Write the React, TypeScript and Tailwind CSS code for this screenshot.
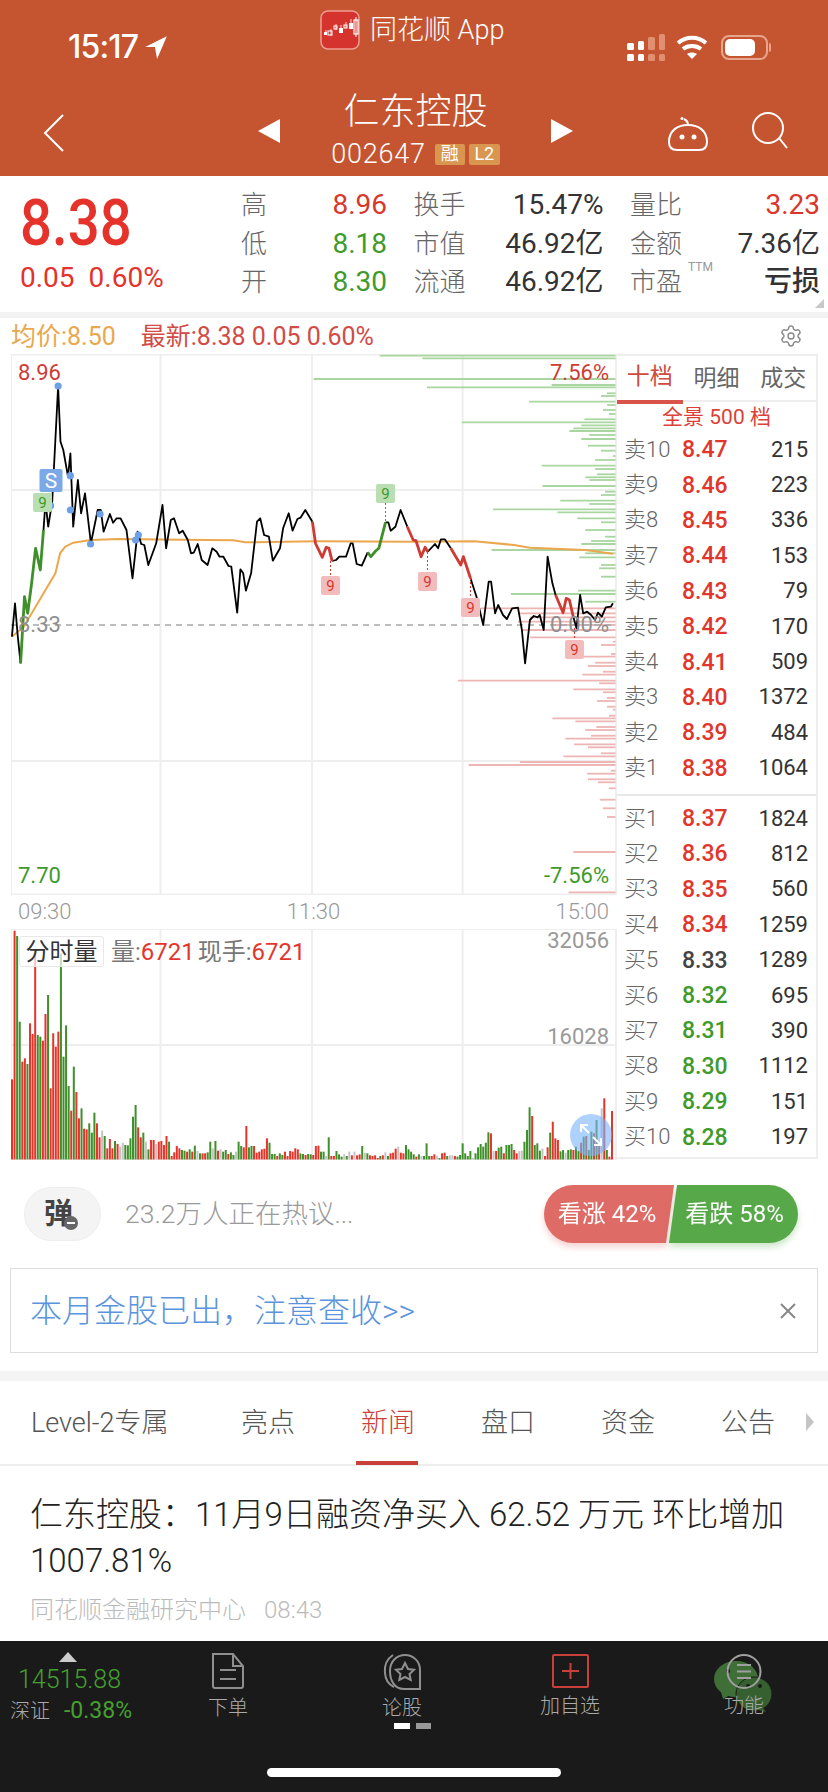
import React from 'react'
import { Settings } from 'lucide-react'

// trace coordinates were read off enlarged crops: x / 2.529, 320 + y / 3 gives page pixels
const toPts = (a: number[]) => {
  const out: string[] = []
  for (let i = 0; i < a.length; i += 2) out.push(`${(a[i] / 2.529).toFixed(1)},${(320 + a[i + 1] / 3).toFixed(1)}`)
  return out.join(' ')
}

const black: number[][] = [
  [30,950,38,850,45,950,52,1030],
  [110,630,115,545,122,620,132,545,147,200,153,365,160,390,172,470,178,400,185,620,197,480,205,580,215,520,230,670,247,570,255,570,262,635,278,582,286,608,295,595,305,595,320,630,335,775,348,635,357,672,365,675,375,735,395,670,411,555,420,685,432,600,440,595,453,640,462,632,475,660,483,700,490,698,500,672,510,720,525,735,537,685,548,695,555,710,565,710,578,738,585,740,600,878,608,748,615,760,622,812,635,760,650,605,658,595,668,645,680,650,690,722,708,685,716,625,730,580,740,632,752,597,760,593,772,570,790,605],
  [840,723,850,720,858,710,875,710,887,670,892,670,902,732,915,737,930,697],
  [975,607,982,607,988,632,1000,620,1013,570,1030,620],
  [1082,695,1100,672,1108,685,1115,658,1125,658,1140,685],
  [1190,775,1205,830,1222,915,1236,785,1242,785,1252,880,1260,855,1272,885,1282,897,1295,865,1310,863,1320,930,1328,1030,1340,900,1350,888,1360,892,1365,885,1375,930,1385,710,1397,790,1405,825],
  [1450,890,1458,925,1467,825,1475,880,1485,875,1495,885,1505,900,1512,878,1522,890,1532,862,1545,860,1550,850],
]
const greenTrace: number[][] = [
  [52,1030,62,830,70,880,80,790,90,685,102,750,110,630],
  [930,697,938,710,950,693,958,685,975,607],
]
const redTrace: number[][] = [
  [790,605,798,670,815,712,825,682,832,685,840,723],
  [1030,620,1045,660,1052,662,1065,710,1075,682,1082,695],
  [1140,685,1165,735,1172,710,1190,775],
  [1405,825,1424,878,1432,835,1440,840,1450,890],
]
const avgLine = [30,950,60,920,90,860,120,800,140,760,152,700,165,680,185,668,230,660,300,657,460,659,590,661,620,667,800,664,1040,665,1200,664,1300,675,1340,683,1480,690,1550,701]

// depth bars: y, left edge
const greenDepth = [107,960,115,1068,177,793,202,1080,195,1395,220,1535,228,1520,245,1338,255,1535,270,1525,282,1540,298,1478,307,1168,316,1470,325,1450,333,1440,345,1490,357,1470,377,1487,392,1520,408,1550,420,1505,437,1370,447,1505,463,1510,472,1480,480,1490,498,1372,515,1530,525,1520,542,1417,552,1490,568,1247,577,1410,595,1460,607,1520,630,1480,650,1530,663,1495,672,1470,690,1243,700,1480,712,1465,735,1520,745,1515,770,1520,812,1462,822,1292,845,1480]
const redDepth = [865,1215,880,1310,892,1340,905,1310,915,1400,930,1320,952,1340]
const redDepthLow = [5,1550,15,1520,42,1545,50,1458,68,1505,78,1487,95,1525,104,1473,122,1158,130,1515,148,1450,157,1525,174,1535,183,1510,200,1535,209,1550,227,1540,235,1397,244,1455,261,1508,270,1480,287,1495,296,1430,313,1452,322,1487,340,1520,349,1425,366,1315,375,1185,392,1545,401,1485,418,1487,427,1512,445,1540,479,1517,505,1525,531,1535,636,1450,757,1438]

const volumes = 'r478 r32 g48 g305 r425 r415 g432 r310 r342 r95 g345 g350 r362 r282 g225 r505 r340 r380 r335 g100 g410 g316 g498 r572 g440 r516 r595 g565 r626 r628 g610 g638 g578 r610 r652 n632 g648 r685 r657 r685 g663 r672 n680 n668 g675 g676 g655 g590 g555 r622 r652 g638 n665 g688 r660 r660 n672 r665 r663 r675 r648 g665 r708 r697 r678 r685 g690 g692 r695 g688 r695 g677 n693 g700 r700 r700 g697 g665 n685 g663 r692 n688 g695 g690 r702 g697 g705 n695 g665 g678 r682 r618 g682 g678 r678 r698 r695 r688 r686 r655 g668 g702 g702 r708 g700 g705 r695 r708 r693 r695 r685 r688 g700 g702 r705 g702 g703 r705 r678 r677 g695 g695 n708 g652 r708 r708 g693 g703 g710 n703 g708 n695 r706 n695 r706 r703 g678 n698 g700 r706 r708 r706 r714 g708 r706 n697 g708 r700 r698 r686 n680 r698 r700 g675 g688 g695 g703 r710 g703 n708 g708 g670 g708 r708 r703 n708 g714 r700 r698 g708 n706 n706 r708 g710 g705 g670 g700 g708 g693 n714 g700 g682 g672 g680 g668 g637 r640 n693 r693 g683 g680 r700 g675 g675 g672 r690 r700 n693 n692 g665 g630 g562 r588 g675 g670 g692 n686 r708 r682 g638 r605 r655 r660 g694 g690 n698 g690 g688 r690 g680 g693 r668 g650 r648 g690 g635 r640 g600 r670 n565 r535 g690 r710 r573'.split(' ')

const volColor: Record<string, string> = { r: '#e5352b', g: '#3f8f2a', n: '#c4c4c4' }

const sells = [
  ['卖10', '8.47', '215'], ['卖9', '8.46', '223'], ['卖8', '8.45', '336'], ['卖7', '8.44', '153'], ['卖6', '8.43', '79'],
  ['卖5', '8.42', '170'], ['卖4', '8.41', '509'], ['卖3', '8.40', '1372'], ['卖2', '8.39', '484'], ['卖1', '8.38', '1064'],
]
const buys = [
  ['买1', '8.37', '1824', 'text-[#e0362c]'], ['买2', '8.36', '812', 'text-[#e0362c]'], ['买3', '8.35', '560', 'text-[#e0362c]'],
  ['买4', '8.34', '1259', 'text-[#e0362c]'], ['买5', '8.33', '1289', 'text-[#444]'], ['买6', '8.32', '695', 'text-[#3f9a2c]'],
  ['买7', '8.31', '390', 'text-[#3f9a2c]'], ['买8', '8.30', '1112', 'text-[#3f9a2c]'], ['买9', '8.29', '151', 'text-[#3f9a2c]'],
  ['买10', '8.28', '197', 'text-[#3f9a2c]'],
]

function AppLogo() {
  return (
    <svg width="40" height="40" viewBox="0 0 40 40">
      <rect x="1" y="1" width="38" height="38" rx="7" fill="#d5332e" stroke="#ee9d93" strokeWidth="1.5" />
      <path d="M6 20v5M11 19v7M16 14v6M21 15v7M26 12v6M31 9v8" stroke="#f8d0cc" strokeWidth="1" />
      <rect x="4" y="22" width="3" height="3" fill="#fff" />
      <rect x="8" y="21" width="4" height="4" fill="none" stroke="#fff" strokeWidth="1" />
      <rect x="14" y="16" width="3" height="3" fill="none" stroke="#fff" strokeWidth="1" />
      <rect x="19" y="18" width="4" height="5" fill="#fff" />
      <rect x="24" y="15" width="3" height="3" fill="none" stroke="#fff" strokeWidth="1" />
      <rect x="29" y="13" width="4" height="6" fill="#fff" />
      <path d="M36 7v20" stroke="#fff" strokeWidth="1" />
      <rect x="34" y="10" width="4" height="14" fill="none" stroke="#fff" strokeWidth="1.200" />
    </svg>
  )
}

function Signal() {
  const cols = [
    { top: 'h-[7px]', tone: 'bg-white' },
    { top: 'h-[9px]', tone: 'bg-white' },
    { top: 'h-[13px]', tone: 'bg-[#e08f71]' },
    { top: 'h-[16px]', tone: 'bg-[#e08f71]' },
  ]
  return (
    <div className="flex items-end gap-[4px]">
      {cols.map((c, i) => (
        <div key={i} className="flex flex-col gap-[4px]">
          <i className={`block w-[6.500px] rounded-[1.500px] ${c.top} ${c.tone}`} />
          <i className={`block h-[7px] w-[6.500px] rounded-[1.500px] ${c.tone}`} />
        </div>
      ))}
    </div>
  )
}

function StatusBar() {
  return (
    <div className="flex h-[72px] text-white">
      <div className="ml-[68px] mt-[29px] flex h-[36px] w-[252px] items-center gap-[6px]">
        <span className="font-['Inter'] text-[32px] leading-none font-medium tracking-[-0.8px]">15:17</span>
        <svg width="24" height="26" viewBox="0 0 22 24"><path d="M21 2 1 12h9l2 11z" fill="#fff" /></svg>
      </div>
      <div className="mt-[10px] flex h-[40px] w-[307px] items-center gap-[10px]">
        <AppLogo />
        <span className="text-[27px] leading-none font-light">同花顺 App</span>
      </div>
      <div className="mt-[34px] flex h-[26px] items-center">
        <Signal />
        <svg className="ml-[10px]" width="34" height="26" viewBox="0 0 34 26" fill="none" stroke="#fff" strokeWidth="4">
          <path d="M3 9c8-7 20-7 28 0" />
          <path d="M8 15c5-4 13-4 18 0" />
          <path d="M17 25l-5-5c3-2 7-2 10 0z" fill="#fff" stroke="none" />
        </svg>
        <div className="ml-[12px] flex items-center">
          <div className="h-[25px] w-[47px] rounded-[8px] border-2 border-[#e6a58c] p-[2px]">
            <div className="h-full w-[30px] rounded-[5px] bg-white" />
          </div>
          <div className="ml-[1px] h-[9px] w-[2px] rounded-r bg-[#e6a58c]" />
        </div>
      </div>
    </div>
  )
}

function NavBar() {
  return (
    <div className="flex h-[104px] text-white">
      <svg className="ml-[42px] mt-[41px]" width="24" height="40" viewBox="0 0 24 40" fill="none" stroke="#fff" strokeWidth="2">
        <path d="M21 2 3 20l18 18" />
      </svg>
      <div className="ml-[192px] mt-[47px] h-0 w-0 border-y-[12px] border-r-[22px] border-y-transparent border-r-white" />
      <div className="flex w-[271px] flex-col items-center">
        <div className="mt-[20px] text-[36px] leading-[40px] font-light">仁东控股</div>
        <div className="mt-[10px] flex h-[24px] items-center">
          <span className="text-[27px] leading-none font-light tracking-[0.8px]">002647</span>
          <span className="ml-[9px] flex h-[21px] w-[30px] items-center justify-center rounded-[2px] bg-[#d9964f] text-[18px] leading-none">融</span>
          <span className="ml-[4px] flex h-[21px] w-[31px] items-center justify-center rounded-[2px] bg-[#d9964f] text-[18px] leading-none">L2</span>
        </div>
      </div>
      <div className="mt-[47px] h-0 w-0 border-y-[12px] border-l-[22px] border-y-transparent border-l-white" />
      <svg className="ml-[94px] mt-[44px]" width="42" height="36" viewBox="0 0 42 36" fill="none" stroke="#fff" strokeWidth="2">
        <path d="M2 26c0-11 8-17 19-17s19 6 19 17c0 5-3 8-8 8H10c-5 0-8-3-8-8z" />
        <path d="M21 9c0-3-2-5-4-6" />
        <circle cx="15" cy="2.5" r="1.5" fill="#fff" stroke="none" />
        <circle cx="15" cy="21" r="2.5" fill="#fff" stroke="none" />
        <circle cx="27" cy="21" r="2.5" fill="#fff" stroke="none" />
      </svg>
      <svg className="ml-[42px] mt-[39px]" width="38" height="38" viewBox="0 0 38 38" fill="none" stroke="#fff" strokeWidth="2">
        <circle cx="17" cy="17" r="15" />
        <path d="m28 27 8 10" />
      </svg>
    </div>
  )
}

function Stat({ label, value, tone, sup }: { label: string; value: string; tone: string; sup?: boolean }) {
  return (
    <div className="relative flex h-[38.5px] items-center justify-between">
      <span className="text-[26px] leading-none font-light text-[#666]">{label}</span>
      {sup && <span className="absolute left-[58px] top-[-2px] text-[12px] leading-none text-[#999]">TTM</span>}
      <span className={`text-[28px] leading-none ${tone}`}>{value}</span>
    </div>
  )
}

function Quote() {
  return (
    <div className="relative flex h-[136px] bg-white">
      <div className="w-[241px] pl-[20px]">
        <div className="mt-[13px] origin-left scale-x-[0.88] text-[64px] leading-[70px] font-medium text-[#e5322a]">8.38</div>
        <div className="mt-[3px] flex gap-[14px] text-[28px] leading-[32px] text-[#e5322a]">
          <span>0.05</span><span>0.60%</span>
        </div>
      </div>
      <div className="mt-[10px] grid grid-cols-[146px_190px_190px] content-start gap-x-[26.500px]">
        <Stat label="高" value="8.96" tone="text-[#d9362c]" />
        <Stat label="换手" value="15.47%" tone="text-[#333]" />
        <Stat label="量比" value="3.23" tone="text-[#d9362c]" />
        <Stat label="低" value="8.18" tone="text-[#3f9a2c]" />
        <Stat label="市值" value="46.92亿" tone="text-[#333]" />
        <Stat label="金额" value="7.36亿" tone="text-[#333]" />
        <Stat label="开" value="8.30" tone="text-[#3f9a2c]" />
        <Stat label="流通" value="46.92亿" tone="text-[#333]" />
        <Stat label="市盈" value="亏损" tone="text-[#333] font-medium" sup />
      </div>
      <div className="absolute bottom-[4px] right-[4px] h-0 w-0 border-b-[9px] border-l-[9px] border-b-[#c8c8c8] border-l-transparent" />
    </div>
  )
}

function Tag({ x, y, tone, fromY, toY }: { x: number; y: number; tone: 'r' | 'g'; fromY: number; toY: number }) {
  const bg = tone === 'r' ? '#f2bcbc' : '#b9deb1'
  const fg = tone === 'r' ? '#d9362c' : '#3f9a2c'
  return (
    <g>
      <path d={`M${x + 9.5} ${fromY}V${toY}`} stroke={fg} strokeWidth="1" strokeDasharray="2 2" />
      <rect x={x} y={y} width="19" height="19" rx="2" fill={bg} />
      <text x={x + 9.5} y={y + 15} textAnchor="middle" fontSize="15" fill={fg}>9</text>
    </g>
  )
}

function LineChart() {
  return (
    <div className="relative h-[541px] w-[606px]">
      <svg className="block" width="606" height="541" viewBox="11 354 606 541">
        <rect x="11" y="354.5" width="605" height="540" fill="#fff" stroke="#eee" strokeWidth="2" />
        {[490, 761].map(y => <path key={y} d={`M11 ${y}H616`} stroke="#eee" strokeWidth="2" />)}
        {[160.5, 312, 462.6].map(x => <path key={x} d={`M${x} 354V895`} stroke="#eee" strokeWidth="2" />)}
        {[[greenDepth, 320, '#a9d5a0'], [redDepth, 320, '#eeb5b5'], [redDepthLow, 640, '#eeb5b5']].map(([list, base, color], k) => {
          const arr = list as number[]
          const rows = []
          for (let i = 0; i < arr.length; i += 2) {
            const y = (base as number) + arr[i] / 3
            rows.push(<path key={i} d={`M${(arr[i + 1] / 2.529).toFixed(1)} ${y.toFixed(1)}H615.5`} stroke={color as string} strokeWidth="1.8" />)
          }
          return <g key={k}>{rows}</g>
        })}
        <path d="M11 625H616" stroke="#a8a8a8" strokeWidth="1.5" strokeDasharray="6 5" />
        <polyline points={toPts(avgLine)} fill="none" stroke="#eba74e" strokeWidth="2" />
        {black.map((l, i) => <polyline key={i} points={toPts(l)} fill="none" stroke="#000" strokeWidth="1.8" strokeLinejoin="round" />)}
        {greenTrace.map((l, i) => <polyline key={i} points={toPts(l)} fill="none" stroke="#3f8f2a" strokeWidth="2.8" strokeLinejoin="round" />)}
        {redTrace.map((l, i) => <polyline key={i} points={toPts(l)} fill="none" stroke="#cf3b33" strokeWidth="2.8" strokeLinejoin="round" />)}
        {[[147,198],[178,467],[128,557],[178,570],[253,582],[229,672],[343,660],[350,645]].map(([x, y]) => (
          <circle key={x + '-' + y} cx={x / 2.529} cy={320 + y / 3} r="3.6" fill="#6ea0e8" />
        ))}
        <Tag x={33} y={493} tone="g" fromY={512} toY={512} />
        <Tag x={376} y={484} tone="g" fromY={503} toY={522} />
        <Tag x={321} y={576} tone="r" fromY={561} toY={576} />
        <Tag x={418} y={572} tone="r" fromY={552} toY={572} />
        <Tag x={461} y={598} tone="r" fromY={578} toY={598} />
        <Tag x={565} y={640} tone="r" fromY={628} toY={640} />
        <rect x="39.5" y="469" width="23" height="23" rx="2" fill="#7ba9e8" />
        <text x="51" y="488" textAnchor="middle" fontSize="21" fill="#fff">S</text>
      </svg>
      <span className="absolute left-[7px] top-[7px] text-[22px] leading-[24px] text-[#cf3b35]">8.96</span>
      <span className="absolute right-[8px] top-[7px] text-[22px] leading-[24px] text-[#cf3b35]">7.56%</span>
      <span className="absolute left-[7px] top-[259px] text-[22px] leading-[24px] text-[#8f8f8f]">8.33</span>
      <span className="absolute right-[8px] top-[259px] text-[22px] leading-[24px] text-[#8f8f8f]">0.00%</span>
      <span className="absolute bottom-[7px] left-[7px] text-[22px] leading-[24px] text-[#3f9a2c]">7.70</span>
      <span className="absolute bottom-[7px] right-[8px] text-[22px] leading-[24px] text-[#3f9a2c]">-7.56%</span>
    </div>
  )
}

function VolumeChart() {
  const step = 600 / (volumes.length - 1)
  return (
    <div className="relative h-[231px] w-[606px]">
      <svg className="block" width="606" height="231" viewBox="11 929 606 231">
        <rect x="11" y="929" width="605" height="231" fill="#fff" stroke="#eee" strokeWidth="2" />
        <path d="M11 1045H616" stroke="#eee" strokeWidth="2" />
        {[160.5, 312, 462.6].map(x => <path key={x} d={`M${x} 929V1160`} stroke="#eee" strokeWidth="2" />)}
        {volumes.map((v, i) => {
          const top = 920 + Number(v.slice(1)) / 3
          return <rect key={i} x={11 + i * step} y={top} width="2" height={1159.5 - top} fill={volColor[v[0]]} />
        })}
      </svg>
      <div className="absolute left-[8px] top-[7px] flex h-[31px] items-center gap-[7px] text-[24px] leading-none">
        <span className="flex h-[31px] w-[85px] items-center justify-center rounded-[3px] border border-[#e8e8e8] bg-white/70 text-[#333]">分时量</span>
        <span className="text-[#777]">量:<span className="mr-[3px] text-[#e5352b]">6721</span>现手:<span className="text-[#e5352b]">6721</span></span>
      </div>
      <span className="absolute right-[8px] top-[0px] text-[22px] leading-[24px] text-[#999]">32056</span>
      <span className="absolute right-[8px] top-[96px] text-[22px] leading-[24px] text-[#999]">16028</span>
      <div className="absolute left-[559px] top-[185px] flex h-[42px] w-[42px] items-center justify-center rounded-full bg-[#78b4fa]/60">
        <svg width="28" height="28" viewBox="0 0 28 28" fill="none" stroke="#fff" strokeWidth="2">
          <path d="M4 11V4h7M4 4l8 8M24 17v7h-7M24 24l-8-8" />
        </svg>
      </div>
    </div>
  )
}

function BookRow({ label, price, qty, tone }: { label: string; price: string; qty: string; tone: string }) {
  return (
    <div className="flex h-[35.4px] items-center pl-[7px] pr-[8px]">
      <span className="w-[58px] text-[22px] leading-none font-light text-[#666]">{label}</span>
      <span className={`text-[23px] leading-none font-medium ${tone}`}>{price}</span>
      <span className="ml-auto text-[22px] leading-none text-[#333]">{qty}</span>
    </div>
  )
}

function Book() {
  return (
    <div className="h-[805px] w-[201px] border-y-2 border-r-2 border-[#eee] bg-white">
      <div className="flex h-[46px] border-b-2 border-[#eee]">
        <div className="flex h-[48px] w-[66px] items-center justify-center border-b-4 border-[#d9534a] pb-[4px] text-[23px] leading-none text-[#cf4a40]">十档</div>
        <div className="flex h-[44px] w-[68px] items-center justify-center text-[23px] leading-none text-[#666]">明细</div>
        <div className="flex h-[44px] w-[66px] items-center justify-center text-[23px] leading-none text-[#666]">成交</div>
      </div>
      <div className="flex h-[30px] items-center justify-center text-[21px] leading-none text-[#dd4038]">全景 500 档</div>
      {sells.map(r => <BookRow key={r[0]} label={r[0]} price={r[1]} qty={r[2]} tone="text-[#e0362c]" />)}
      <div className="mb-[5px] mt-[8px] h-[2px] bg-[#e8e8e8]" />
      {buys.map(r => <BookRow key={r[0]} label={r[0]} price={r[1]} qty={r[2]} tone={r[3]} />)}
    </div>
  )
}

function Sentiment() {
  return (
    <div className="flex h-[108px] items-center bg-white">
      <div className="relative ml-[24px] flex h-[54px] w-[77px] items-center justify-center rounded-full border border-[#eee] bg-[#f4f4f4]">
        <span className="mr-[8px] text-[29px] leading-none font-bold text-[#444]">弹</span>
        <span className="absolute left-[39px] top-[28px] flex h-[14px] w-[14px] items-center justify-center rounded-full bg-[#666]">
          <i className="block h-[2px] w-[8px] bg-white" />
        </span>
      </div>
      <span className="ml-[24px] text-[26.500px] leading-none font-light text-[#999]">23.2万人正在热议...</span>
      <div className="ml-auto mr-[30px] flex">
        <div className="drop-shadow-[0_4px_3px_rgba(222,107,102,0.3)]">
          <div className="flex h-[58px] w-[130px] items-center justify-center rounded-l-[29px] bg-[#de6b66] pr-[4px] text-[24px] leading-none text-white [clip-path:polygon(0_0,100%_0,calc(100%-8px)_100%,0_100%)]">看涨 42%</div>
        </div>
        <div className="-ml-[5px] drop-shadow-[0_4px_3px_rgba(87,168,72,0.3)]">
          <div className="flex h-[58px] w-[129px] items-center justify-center rounded-r-[29px] bg-[#57a848] pl-[2px] text-[24px] leading-none text-white [clip-path:polygon(8px_0,100%_0,100%_100%,0_100%)]">看跌 58%</div>
        </div>
      </div>
    </div>
  )
}

function Tabs() {
  const items = [
    { t: 'Level-2专属', w: 'w-[208px] pl-[31px]' }, { t: '亮点', w: 'w-[120px]' }, { t: '新闻', w: 'w-[120px]', on: true },
    { t: '盘口', w: 'w-[120px]' }, { t: '资金', w: 'w-[120px]' }, { t: '公告', w: 'w-[120px]' },
  ]
  return (
    <div className="flex h-[85px] border-b-2 border-[#eee] bg-white">
      {items.map(i => (
        <div key={i.t} className={`relative flex h-[84px] items-center ${i.w} ${i.t === 'Level-2专属' ? '' : 'justify-center'}`}>
          <span className={`text-[27px] leading-none font-light ${i.on ? 'text-[#c8403a]' : 'text-[#555]'}`}>{i.t}</span>
          {i.on && <i className="absolute bottom-0 left-[28px] block h-[4px] w-[62px] bg-[#c8403a]" />}
        </div>
      ))}
      <div className="-ml-[2px] mt-[32px] h-0 w-0 border-y-[9px] border-l-[8px] border-y-transparent border-l-[#c4c4c4]" />
    </div>
  )
}

function TabBar() {
  const label = 'text-[20px] leading-none font-light text-[#aaa]'
  return (
    <div className="h-[152px] bg-[#1a1a1a]">
      <div className="flex h-[82px]">
        <div className="w-[190px] pl-[10px]">
          <div className="ml-[49px] mt-[11px] h-0 w-0 border-x-[9px] border-b-[10px] border-x-transparent border-b-[#ccc]" />
          <div className="ml-[8px] mt-[4px] text-[25px] leading-[28px] font-light text-[#45a030]">14515.88</div>
          <div className="mt-[5px] flex items-center gap-[14px]">
            <span className="text-[20px] leading-none font-light text-[#aaa]">深证</span>
            <span className="text-[23px] leading-none text-[#45a030]">-0.38%</span>
          </div>
        </div>
        <div className="mt-[12px] flex w-[76px] flex-col items-center gap-[9px]">
          <svg width="34" height="36" viewBox="0 0 34 36" fill="none" stroke="#8f8f8f" strokeWidth="2">
            <path d="M2 1h20l10 12v20a2 2 0 0 1-2 2H4a2 2 0 0 1-2-2zM22 1v12h10" />
            <path d="M9 17h16M9 26h16" />
          </svg>
          <span className={label}>下单</span>
        </div>
        <div className="ml-[101px] mt-[12px] flex w-[70px] flex-col items-center gap-[8px]">
          <svg width="40" height="37" viewBox="0 0 40 37" fill="none" stroke="#8f8f8f" strokeWidth="2">
            <path d="M12 34c-11-5-13-24-1-32" />
            <path d="M38 36H22C12 36 8 27 8 18 8 8 15 2 23 2c8 0 15 6 15 15z" />
            <path d="m23 10 3 6 6 .8-4.500 4.200 1.200 6-5.700-3-5.700 3 1.200-6L14 16.800l6-.8z" />
          </svg>
          <span className={label}>论股</span>
        </div>
        <div className="ml-[98px] mt-[13px] flex w-[70px] flex-col items-center gap-[8px]">
          <svg width="37" height="34" viewBox="0 0 37 34" fill="none" stroke="#c9403a" strokeWidth="2">
            <rect x="1" y="1" width="35" height="32" rx="1" />
            <path d="M18.500 9v16M10 17h17" />
          </svg>
          <span className={label}>加自选</span>
        </div>
        <div className="relative ml-[104px] mt-[13px] flex w-[70px] flex-col items-center gap-[7px]">
          {/* translucent chat bubbles floating under the menu entry strokes */}
          <svg className="absolute left-[5px] top-[7px]" width="58" height="52" viewBox="0 0 58 52">
            <ellipse cx="22" cy="18" rx="22" ry="18" fill="#3f6f36" />
            <path d="M6 28 9 38l9-5z" fill="#3f6f36" />
            <ellipse cx="40" cy="33" rx="18" ry="17" fill="#36602f" stroke="#1a1a1a" strokeWidth="1" />
            <path d="m47 44 5 7-10-3z" fill="#36602f" />
            <circle cx="14" cy="10" r="2.200" fill="#1a1a1a" />
            <circle cx="34" cy="25" r="2" fill="#1a1a1a" />
            <circle cx="46" cy="25" r="2" fill="#1a1a1a" />
          </svg>
          <svg className="relative" width="36" height="35" viewBox="0 0 36 35" fill="none" stroke="#a0a0a0" strokeWidth="2">
            <circle cx="18" cy="17.500" r="16.500" />
            <path d="M11 11h14M11 17.500h14M11 24h14" />
          </svg>
          <span className={`relative ${label}`}>功能</span>
        </div>
      </div>
      <div className="ml-[394px] flex gap-[6px]">
        <i className="block h-[6px] w-[16px] bg-white" />
        <i className="block h-[6px] w-[15px] bg-[#999]" />
      </div>
      <div className="ml-[267px] mt-[39px] h-[9px] w-[294px] rounded-full bg-white" />
    </div>
  )
}

export default function App() {
  return (
    <div className="h-[1792px] w-[828px] overflow-hidden bg-white font-['Roboto','Noto_Sans_CJK_SC',sans-serif]">
      <div className="h-[176px] bg-[#c55531]">
        <StatusBar />
        <NavBar />
      </div>
      <Quote />
      <div className="h-[6px] bg-[#f2f2f2]" />
      <div className="flex h-[36px] items-center pl-[11px] text-[25px] leading-none">
        <span className="text-[#e9a84d]">均价:8.50</span>
        <span className="ml-[25px] text-[#d24b46]">最新:8.38 0.05 0.60%</span>
        <Settings className="ml-auto mr-[25px]" size={24} strokeWidth={1.4} color="#888" />
      </div>
      <div className="flex pl-[11px]">
        <div className="w-[606px]">
          <LineChart />
          <div className="flex h-[34px] items-center justify-between pl-[7px] pr-[8px] text-[22px] leading-none font-light text-[#999]">
            <span>09:30</span><span>11:30</span><span>15:00</span>
          </div>
          <VolumeChart />
        </div>
        <Book />
      </div>
      <Sentiment />
      <div className="mx-[10px] flex h-[85px] items-center border border-[#ddd] pl-[19px] pr-[20px]">
        <span className="text-[32px] leading-none font-light text-[#5b93dd]">本月金股已出，注意查收&gt;&gt;</span>
        <svg className="ml-auto" width="18" height="18" viewBox="0 0 18 18" stroke="#888" strokeWidth="2"><path d="m2 2 14 14M16 2 2 16" /></svg>
      </div>
      <div className="mt-[18px] h-[10px] bg-[#f4f4f4]" />
      <Tabs />
      <div className="h-[175px] bg-white px-[30px] pt-[26px]">
        <div className="w-[768px] text-[33px] leading-[46px] font-light text-[#222]">仁东控股：11月9日融资净买入 62.52 万元 环比增加 1007.81%</div>
        <div className="mt-[12px] flex gap-[18px] text-[24px] leading-[28px] font-light text-[#bbb]">
          <span>同花顺金融研究中心</span><span>08:43</span>
        </div>
      </div>
      <TabBar />
    </div>
  )
}
